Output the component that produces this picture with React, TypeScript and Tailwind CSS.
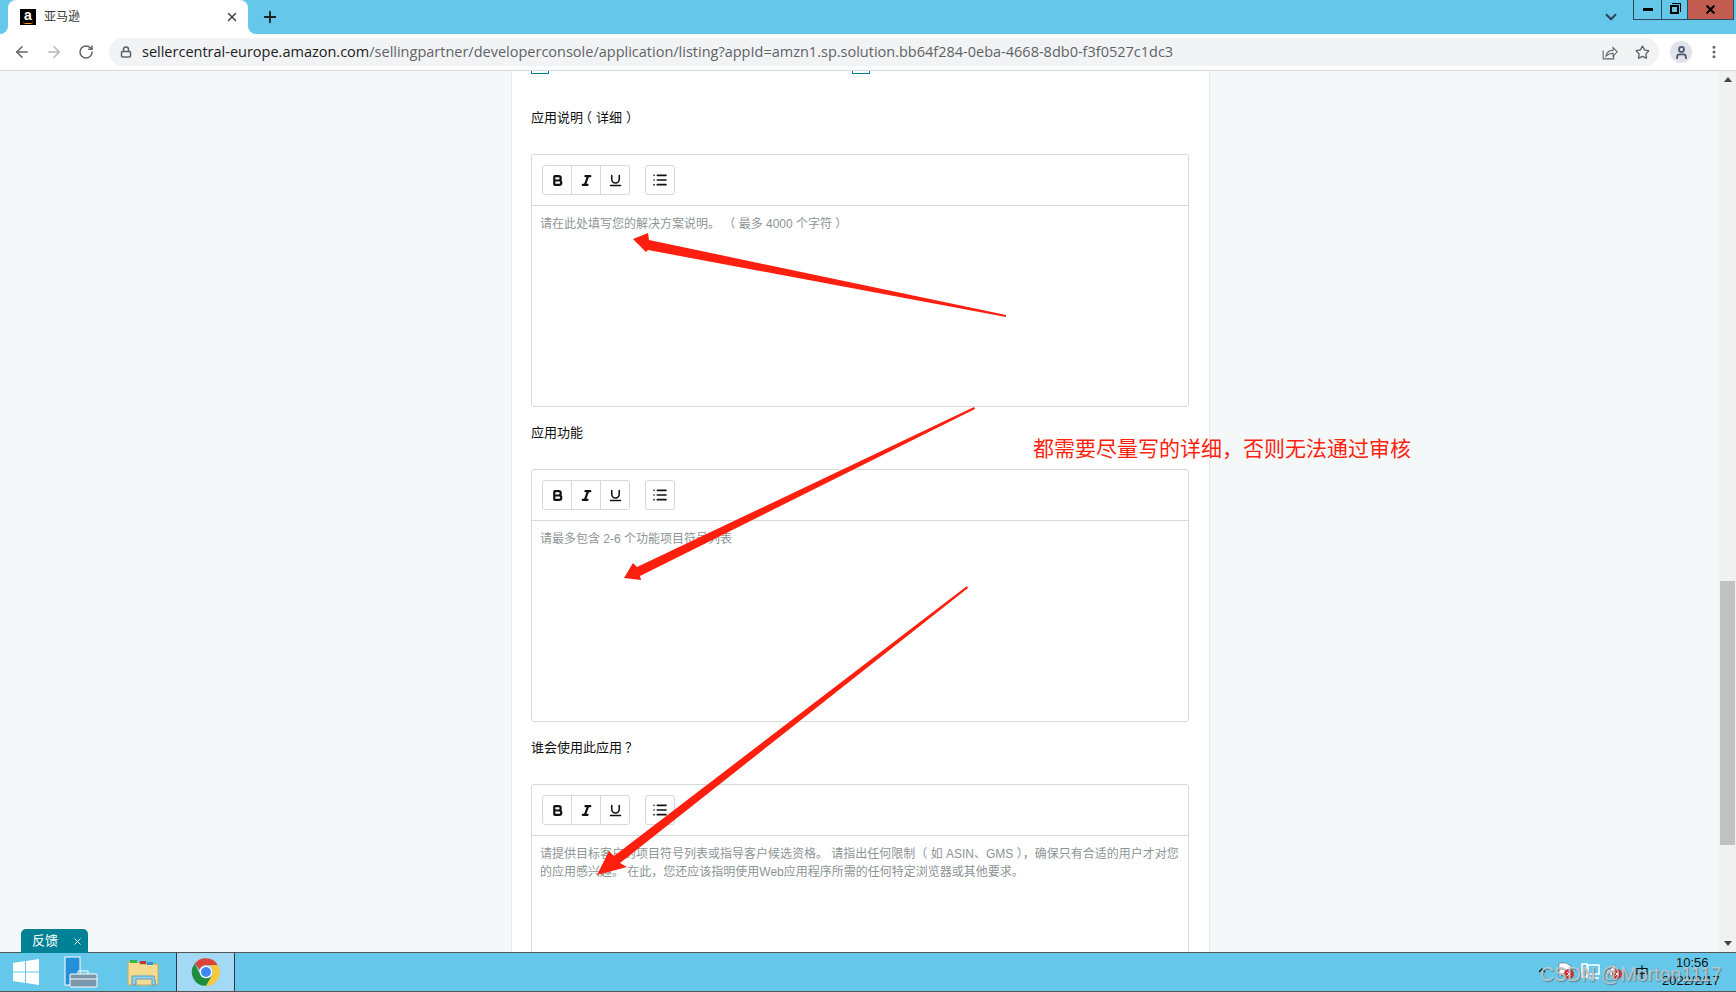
import {
  ArrowLeft,
  ArrowRight,
  Bold,
  ChevronDown,
  Italic,
  List,
  Lock,
  MoreVertical,
  Plus,
  RotateCw,
  Star,
  Underline,
  User,
  X,
} from 'lucide-react'

const font = "font-['Liberation_Sans','Noto_Sans_CJK_SC',sans-serif]"

function Editor({ placeholder, clip }: { placeholder: string; clip?: boolean }) {
  return (
    <div
      className={`ml-[19px] mr-[20px] rounded-[3px] border border-[#d5d9d9] bg-white ${clip ? 'h-[260px]' : 'h-[253px]'}`}
    >
      <div className="flex h-[51px] items-center gap-[15px] border-b border-[#d5d9d9] px-[10px]">
        <div className="flex h-[30px] rounded-[3px] border border-[#d5d9d9]">
          <button className="flex w-[29px] items-center justify-center border-r border-[#d5d9d9]">
            <Bold size={13} strokeWidth={4} className="text-[#111]" />
          </button>
          <button className="flex w-[29px] items-center justify-center border-r border-[#d5d9d9]">
            <Italic size={13} strokeWidth={4} className="text-[#111]" />
          </button>
          <button className="flex w-[28px] items-center justify-center">
            <Underline size={15} strokeWidth={2.5} className="text-[#111]" />
          </button>
        </div>
        <button className="flex h-[30px] w-[30px] items-center justify-center rounded-[3px] border border-[#d5d9d9]">
          <List size={16} strokeWidth={2.5} className="text-[#111]" />
        </button>
      </div>
      <p className="px-[8px] pt-[9px] text-[12px] leading-[18px] text-[#8d9496]">{placeholder}</p>
    </div>
  )
}

function Label({ children, top }: { children: React.ReactNode; top: string }) {
  return <p className={`mx-[19px] text-[13px] leading-[20px] text-[#0f1111] ${top}`}>{children}</p>
}

function ChromeLogo() {
  return (
    <svg width="30" height="30" viewBox="0 0 48 48">
      <path d="M24 2a22 22 0 0 1 19.05 11H24a11 11 0 0 0-10.4 7.4L6.2 10.3A22 22 0 0 1 24 2z" fill="#db4437" />
      <path d="M43.05 13A22 22 0 0 1 24 46l9.5-16.500A11 11 0 0 0 33.500 18 11 11 0 0 0 31 13z" fill="#fcc934" />
      <path d="M24 46A22 22 0 0 1 6.200 10.300l9.300 19.200A11 11 0 0 0 33.500 29.500z" fill="#1e8e3e" />
      <circle cx="24" cy="24" r="10" fill="#fff" />
      <circle cx="24" cy="24" r="8" fill="#4285f4" />
    </svg>
  )
}

function TrayIcons() {
  return (
    <svg width="96" height="30" viewBox="0 0 96 30" fill="none">
      <path d="M0 15l3-3 3 3" stroke="#111" strokeWidth="1.5" />
      <path d="M20 6h7l5 3v8H22v3h-2z" fill="#fff" stroke="#444" strokeWidth="0.5" />
      <circle cx="30" cy="17" r="5" fill="#e02b2b" />
      <path d="M28 15l4 4M32 15l-4 4" stroke="#fff" strokeWidth="1" />
      <rect x="43" y="7" width="5" height="13" fill="none" stroke="#fff" strokeWidth="1.5" />
      <rect x="49" y="8" width="11" height="9" fill="#65c8ea" stroke="#fff" strokeWidth="1.5" />
      <path d="M50 21h10M55 17v4" stroke="#fff" strokeWidth="1.5" />
      <path d="M68 13h3l5-6v16l-5-6h-3z" fill="#fff" stroke="#777" strokeWidth="0.5" />
      <circle cx="78" cy="17" r="5" fill="#e02b2b" />
      <path d="M76 15l4 4M80 15l-4 4" stroke="#fff" strokeWidth="1" />
    </svg>
  )
}

function Annotations() {
  return (
    <svg className="pointer-events-none absolute inset-0" width="1736" height="992" viewBox="0 0 1736 992">
      <polygon points="633,239 648,233 649,240 1006,315 1006,317 648,250 646,252" fill="#ff1f0f" />
      <polygon points="624,578 633,563 637,567 974,407 975,409 640,576 641,580" fill="#ff1f0f" />
      <polygon points="597,875 609,851 614,856 967,586 968,588 620,863 627,867" fill="#ff1f0f" />
    </svg>
  )
}

export default function App() {
  return (
    <div className={`relative flex h-[992px] w-[1736px] flex-col overflow-hidden bg-[#f5f8f9] ${font}`}>
      {/* title bar */}
      <div className="relative flex h-[34px] shrink-0 items-end bg-[#65c8ea] pl-[8px]">
        <div className="relative flex h-[34px] w-[240px] items-center rounded-t-[8px] bg-white pl-[12px] pr-[9px]">
          <div className="absolute bottom-0 left-[-8px] h-[8px] w-[8px] bg-white">
            <div className="h-[8px] w-[8px] rounded-br-[8px] bg-[#65c8ea]" />
          </div>
          <div className="absolute bottom-0 right-[-8px] h-[8px] w-[8px] bg-white">
            <div className="h-[8px] w-[8px] rounded-bl-[8px] bg-[#65c8ea]" />
          </div>
          <div className="relative flex h-[16px] w-[16px] items-start justify-center bg-black text-[14px] font-bold leading-[13px] text-white">
            a
            <div className="absolute bottom-[1px] left-[3px] h-[3px] w-[10px] rounded-b-full border-b border-[#f90]" />
          </div>
          <span className="ml-[8px] flex-1 text-[12px] text-[#333]">亚马逊</span>
          <X size={14} strokeWidth={2.5} className="text-[#444]" />
        </div>
        <Plus size={18} strokeWidth={2.5} className="mb-[8px] ml-[13px] text-[#222]" />
        <ChevronDown size={18} strokeWidth={2.5} className="absolute left-[1602px] top-[8px] text-[#2a4250]" />
        <div className="absolute left-[1633px] top-0 flex h-[20px] border-x border-b border-[#2b4a5c]">
          <div className="flex w-[28px] items-center justify-center border-r border-[#2b4a5c]">
            <div className="h-[3px] w-[10px] bg-black" />
          </div>
          <div className="flex w-[26px] items-center justify-center border-r border-[#2b4a5c]">
            <div className="relative h-[9px] w-[9px] border-2 border-black">
              <div className="absolute -right-[4px] -top-[4px] h-[9px] w-[9px] border-r border-t border-black" />
            </div>
          </div>
          <div className="flex w-[45px] items-center justify-center bg-[#c25b50]">
            <X size={13} strokeWidth={4} className="text-black" />
          </div>
        </div>
      </div>

      {/* address bar */}
      <div className="flex h-[37px] shrink-0 items-center border-b border-[#d5d8db] bg-white pl-[13px]">
        <ArrowLeft size={18} strokeWidth={2} className="text-[#5f6368]" />
        <ArrowRight size={18} strokeWidth={2} className="ml-[14px] text-[#b5b8bb]" />
        <RotateCw size={16} strokeWidth={2.2} className="ml-[15px] text-[#5f6368]" />
        <div className="ml-[15px] flex h-[28px] w-[1550px] items-center rounded-full bg-[#f1f3f4] pl-[11px] font-['Open_Sans',sans-serif]">
          <Lock size={12} strokeWidth={3} className="text-[#5f6368]" />
          <span className="ml-[10px] flex-1 text-[14.500px] leading-[26px] text-[#5f6368]">
            <span className="text-[#202124]">sellercentral-europe.amazon.com</span>
            /sellingpartner/developerconsole/application/listing?appId=amzn1.sp.solution.bb64f284-0eba-4668-8db0-f3f0527c1dc3
          </span>
          <svg width="17" height="17" viewBox="0 0 24 24" fill="none" stroke="#5f6368" strokeWidth="1.5" className="mr-[17px]">
            <path d="M3 9v12h15v-5M7 17c1-5 5-8 10-8V5l6 6-6 6v-4c-4 0-7 1-10 4z" />
          </svg>
          <Star size={15} strokeWidth={2.2} className="mr-[9px] text-[#5f6368]" />
        </div>
        <div className="ml-[11px] flex h-[22px] w-[22px] items-center justify-center rounded-full bg-[#e0e3e8]">
          <User size={15} strokeWidth={3} className="text-[#4f5b72]" />
        </div>
        <MoreVertical size={16} strokeWidth={2.5} className="ml-[14px] text-[#5f6368]" />
      </div>

      {/* page */}
      <div className="flex min-h-0 flex-1">
        <div className="min-w-0 flex-1 overflow-hidden">
          <div className="ml-[511px] h-full w-[699px] border-x border-[#e6ebec] bg-white">
            <div className="flex h-[3px] gap-[303px] pl-[19px]">
              <div className="h-[3px] w-[18px] border-x border-b border-[#008296]" />
              <div className="h-[3px] w-[18px] border-x border-b border-[#008296]" />
            </div>
            <Label top="mt-[34px]">
              应用说明
              <span className="-ml-[4px] mr-[4px]">（</span>详细<span className="ml-[4px] -mr-[4px]">）</span>
            </Label>
            <div className="h-[26px]" />
            <Editor placeholder="请在此处填写您的解决方案说明。 （ 最多 4000 个字符 ）" />
            <Label top="mt-[16px]">应用功能</Label>
            <div className="h-[26px]" />
            <Editor placeholder="请最多包含 2-6 个功能项目符号列表" />
            <Label top="mt-[16px]">
              谁会使用此应用<span className="ml-[3px]">？</span>
            </Label>
            <div className="h-[26px]" />
            <Editor
              clip
              placeholder="请提供目标客户的项目符号列表或指导客户候选资格。 请指出任何限制（ 如 ASIN、GMS ），确保只有合适的用户才对您的应用感兴趣。 在此，您还应该指明使用Web应用程序所需的任何特定浏览器或其他要求。"
            />
          </div>
        </div>
        <div className="flex w-[17px] shrink-0 flex-col items-center bg-[#f1f1f1]">
          <div className="flex h-[17px] w-full items-center justify-center">
            <div className="h-0 w-0 border-x-[4px] border-b-[5px] border-x-transparent border-b-[#444]" />
          </div>
          <div className="h-[493px] shrink-0" />
          <div className="h-[264px] w-[15px] shrink-0 bg-[#c1c1c1]" />
          <div className="flex-1" />
          <div className="flex h-[17px] w-full items-center justify-center">
            <div className="h-0 w-0 border-x-[4px] border-t-[5px] border-x-transparent border-t-[#444]" />
          </div>
        </div>
      </div>

      {/* taskbar */}
      <div className="relative flex h-[40px] shrink-0 items-stretch border-y border-[#555] bg-[#65c8ea] pl-[1px]">
        <div className="flex w-[49px] items-center justify-center">
          <svg width="28" height="26" viewBox="0 0 28 26" fill="#fff">
            <path d="M1 4l12-2v10.500H1zM14 2l13-2v12.500H14zM1 13.500h12V24L1 22zM14 13.500h13V26l-13-2z" />
          </svg>
        </div>
        <div className="flex w-[62px] items-center justify-center">
          <svg width="34" height="32" viewBox="0 0 34 32">
            <rect x="1" y="1" width="15" height="28" fill="#2390d8" stroke="#fff" />
            <rect x="6" y="18" width="27" height="13" rx="1" fill="#7a96ab" stroke="#fff" />
            <path d="M14 18v-3h10v3M6 23h27" fill="none" stroke="#fff" />
          </svg>
        </div>
        <div className="flex w-[62px] items-center justify-center">
          <svg width="32" height="28" viewBox="0 0 32 28">
            <path d="M1 4h10l2 2h18v21H1z" fill="#f3dc92" stroke="#c8a85a" />
            <path d="M3 2h7v3H3z" fill="#37b34a" />
            <path d="M13 3h6v3h-6z" fill="#c0392b" />
            <path d="M20 4h6v3h-6z" fill="#3a8fd8" />
            <path d="M5 18h22l2 9h-4v-6H9v6H5z" fill="#8fd0ea" stroke="#5a9fc0" />
          </svg>
        </div>
        <div className="ml-[2px] flex w-[59px] items-center justify-center border-x border-[#2b3a44] bg-[#a3d9f5]">
          <ChromeLogo />
        </div>
        <div className="ml-auto flex items-center pr-[16px] text-[#111]">
          <TrayIcons />
          <span className="text-[14px] leading-[14px]">中</span>
          <div className="ml-[13px] w-[58px] text-[13px] leading-[18px]">
            <p className="pl-[14px]">10:56</p>
            <p>2022/2/17</p>
          </div>
        </div>
      </div>

      {/* feedback tab */}
      <div className="absolute bottom-[39px] left-[21px] flex h-[24px] w-[67px] items-center justify-between rounded-t-[5px] bg-[#008296] pl-[11px] pr-[5px] text-[13px] text-white">
        反馈
        <X size={11} strokeWidth={2} />
      </div>

      <Annotations />
      <p className="absolute left-[1033px] top-[434px] text-[21px] leading-[30px] text-[#ff1f0f]">
        都需要尽量写的详细，否则无法通过审核
      </p>
      <p className="absolute left-[1540px] top-[962px] text-[19.500px] leading-[24px] text-[#c4cacf]/90 [text-shadow:1px_1px_1px_#55555599]">
        CSDN @Morton1117
      </p>
    </div>
  )
}
